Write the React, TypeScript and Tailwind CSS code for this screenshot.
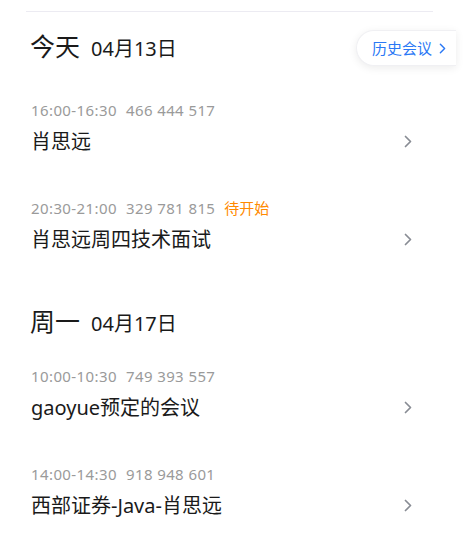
const font = "font-['Noto_Sans','Noto_Sans_CJK_SC',sans-serif]";

type Meeting = {
  time: string;
  code: string;
  title: string;
  status?: string;
};

const days: { day: string; date: string; meetings: Meeting[] }[] = [
  {
    day: "今天",
    date: "04月13日",
    meetings: [
      { time: "16:00-16:30", code: "466 444 517", title: "肖思远" },
      { time: "20:30-21:00", code: "329 781 815", title: "肖思远周四技术面试", status: "待开始" },
    ],
  },
  {
    day: "周一",
    date: "04月17日",
    meetings: [
      { time: "10:00-10:30", code: "749 393 557", title: "gaoyue预定的会议" },
      { time: "14:00-14:30", code: "918 948 601", title: "西部证券-Java-肖思远" },
    ],
  },
];

function Chevron({ className }: { className?: string }) {
  return (
    <svg width="8" height="13" viewBox="0 0 8 13" fill="none" className={className}>
      <path d="M1.5 1.5 6.5 6.5 1.5 11.5" stroke="currentColor" strokeWidth="1.7" strokeLinecap="round" strokeLinejoin="round" />
    </svg>
  );
}

function MeetingRow({ m }: { m: Meeting }) {
  return (
    <div className="flex items-center pl-[31px] pr-[53px] pt-[21px] pb-[21px]">
      <div className="flex-1">
        <div className="flex items-center h-[20px] leading-[20px] text-[15px] tracking-[0.4px] text-[#9a9a9a] whitespace-pre">
          <span>{m.time}</span>
          <span className="ml-[9px]">{m.code}</span>
          {m.status && <span className="ml-[9px] tracking-normal text-[#ff8a00]">{m.status}</span>}
        </div>
        <div className="mt-[8px] h-[28px] leading-[28px] text-[20px] text-[#1a1a1a]">{m.title}</div>
      </div>
      <Chevron className="text-[#888c94] mt-[26px]" />
    </div>
  );
}

export default function App() {
  return (
    <div className={`relative w-[465px] h-[559px] bg-white overflow-hidden ${font}`}>
      <div className="pt-[11px]">
        <div className="ml-[26px] mr-[32px] h-px bg-[#ecebf2]" />
      </div>

      {days.map((d, i) => (
        <div key={d.day}>
          <div className={`${i === 0 ? "pt-[20px] pb-[19px]" : "pt-[32px] pb-[10px]"}`}>
            <div className="flex items-baseline h-[28px] pl-[30px] leading-[28px]">
              <span className="text-[25px] text-[#1a1a1a]">{d.day}</span>
              <span className="ml-[11px] text-[20px] text-[#1a1a1a]">{d.date}</span>
            </div>
          </div>
          {d.meetings.map((m) => (
            <MeetingRow key={m.code} m={m} />
          ))}
        </div>
      ))}

      {/* floating history button */}
      <button className="absolute top-[30px] right-[9px] h-[36px] w-[100px] flex items-center pl-[15px] rounded-l-full bg-white shadow-[0_2px_8px_rgba(0,0,0,0.08)] border border-r-0 border-[#f0f0f3] text-[15px] leading-[20px] text-[#2a78f5]">
        <span>历史会议</span>
        <Chevron className="ml-[7px] w-[7px] h-[11px]" />
      </button>
    </div>
  );
}
